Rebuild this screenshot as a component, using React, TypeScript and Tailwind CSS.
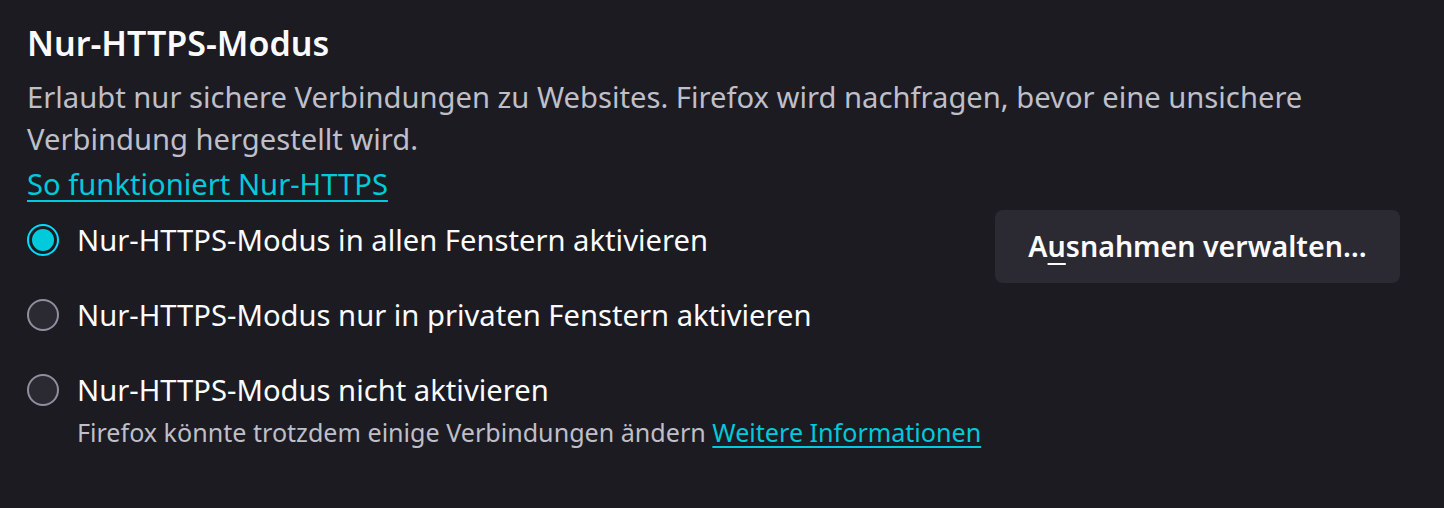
import React from 'react';

type Option = {
  label: string;
  checked?: boolean;
  note?: boolean;
};

const options: Option[] = [
  { label: 'Nur-HTTPS-Modus in allen Fenstern aktivieren', checked: true },
  { label: 'Nur-HTTPS-Modus nur in privaten Fenstern aktivieren' },
  { label: 'Nur-HTTPS-Modus nicht aktivieren', note: true },
];

function Radio({ checked }: { checked?: boolean }) {
  if (checked) {
    return (
      <span className="flex h-[32px] w-[32px] shrink-0 items-center justify-center rounded-full border-2 border-[#00ddff] bg-[#1c1b22]">
        <span className="h-[22px] w-[22px] rounded-full bg-[#00cadb]" />
      </span>
    );
  }
  return <span className="h-[32px] w-[32px] shrink-0 rounded-full border-2 border-[#8f8f9d] bg-[#2b2a33]" />;
}

export default function App() {
  return (
    <div className="min-h-screen bg-[#1c1b22] font-['Noto_Sans',sans-serif] text-[#fbfbfe]">
      <div className="px-[27px] pt-[22px]">
        <h1 className="text-[34px] font-semibold leading-[42px]">Nur-HTTPS-Modus</h1>
        <p className="mt-[12px] text-[29.2px] leading-[42px] text-[#bfbfc9]">
          Erlaubt nur sichere Verbindungen zu Websites. Firefox wird nachfragen, bevor eine unsichere
          <br />
          Verbindung hergestellt wird.
        </p>
        <a href="#" className="mt-[3px] block w-fit text-[29.2px] leading-[42px] text-[#00cadb] underline decoration-2 underline-offset-[5px]">
          So funktioniert Nur-HTTPS
        </a>

        <div className="mt-[14px] flex items-start justify-between pr-[17px]">
          <div className="flex flex-col gap-[33px]">
            {options.map((o) => (
              <div key={o.label}>
                <label className="flex items-center gap-[18px]">
                  <Radio checked={o.checked} />
                  <span className="text-[29.2px] leading-[42px]">{o.label}</span>
                </label>
                {o.note && (
                  <p className="ml-[50px] mt-[5px] text-[25.1px] leading-[32px] text-[#bfbfc9]">
                    Firefox könnte trotzdem einige Verbindungen ändern{' '}
                    <a href="#" className="text-[#00cadb] underline underline-offset-[4px]">
                      Weitere Informationen
                    </a>
                  </p>
                )}
              </div>
            ))}
          </div>
          <button className="mt-[-9px] flex h-[73px] w-[405px] items-center justify-center rounded-[8px] bg-[#2b2a33] text-[28.6px] font-semibold">
            A<span className="underline underline-offset-[6px]">u</span>snahmen verwalten…
          </button>
        </div>
      </div>
    </div>
  );
}
